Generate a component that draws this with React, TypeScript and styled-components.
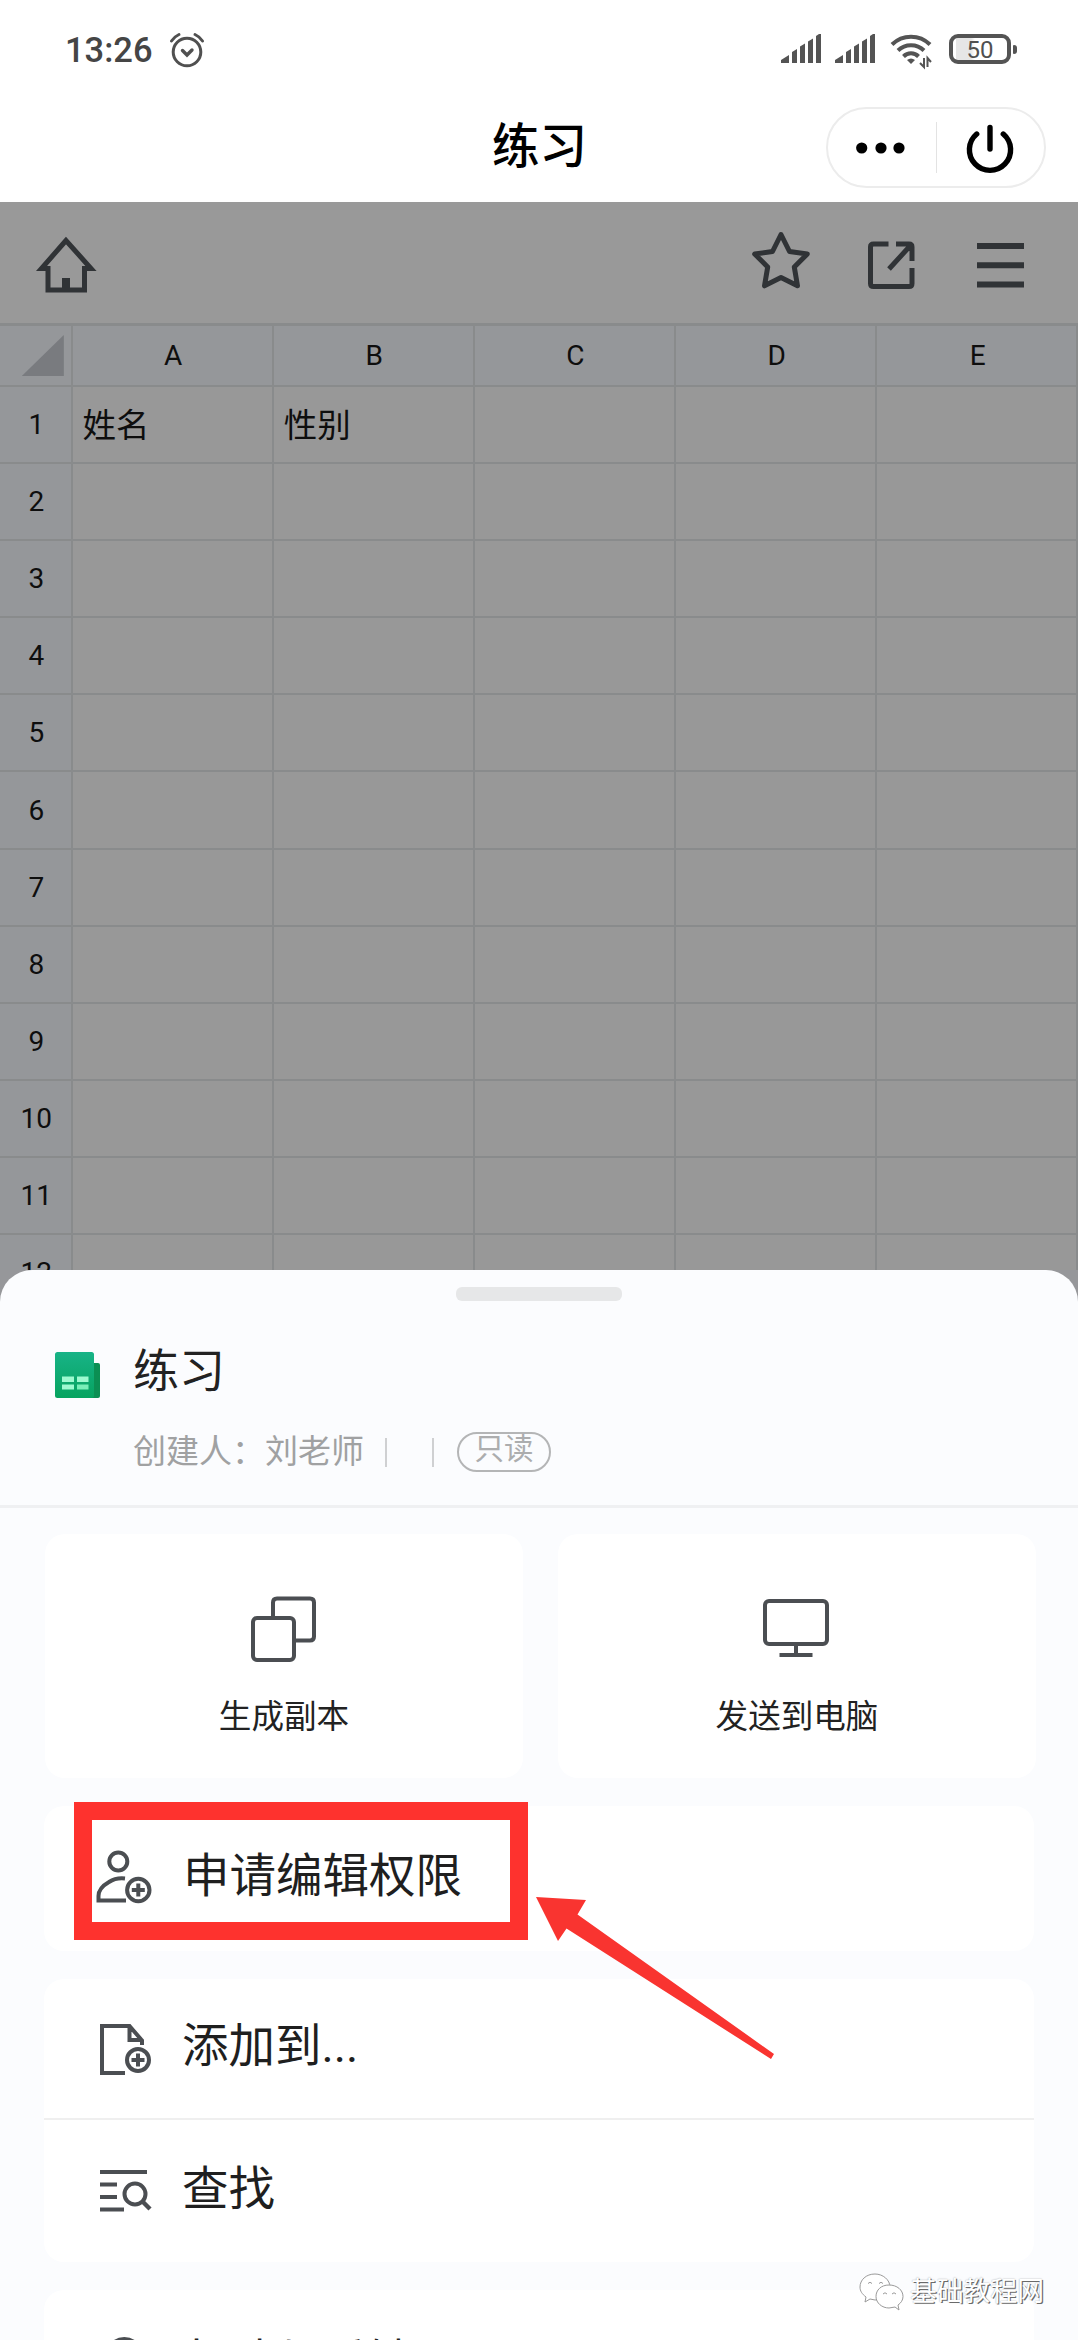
import React from "react";
import styled, { createGlobalStyle } from "styled-components";

const GlobalStyle = createGlobalStyle`
  html, body { margin: 0; padding: 0; background: #ffffff; }
  * { box-sizing: border-box; }
`;

const sans = `Roboto, "Noto Sans CJK SC", sans-serif`;
const ink = "#4b4e52";

const Screen = styled.div`
  position: relative;
  width: 1080px;
  height: 2340px;
  overflow: hidden;
  display: flex;
  flex-direction: column;
  background: #ffffff;
  font-family: ${sans};
`;

/* ---------- status bar ---------- */
const StatusBar = styled.div`
  height: 96px;
  padding: 0 63px 0 65px;
  display: flex;
  align-items: flex-start;
  justify-content: space-between;
`;
const StatusLeft = styled.div`
  display: flex;
  align-items: flex-start;
`;
const Clock = styled.span`
  width: 103px;
  padding-top: 30px;
  font-size: 34.5px;
  line-height: 40px;
  font-weight: 500;
  color: #454545;
`;
const StatusRight = styled.div`
  display: flex;
  align-items: flex-start;
  padding-top: 30px;
`;
const Signals = styled.svg`
  margin-right: 14px;
`;
const Battery = styled.div`
  display: flex;
  align-items: center;
  margin: 4px 0 0 14px;
`;
const BatteryBody = styled.div`
  width: 62px;
  height: 30px;
  border: 4px solid #545454;
  border-radius: 9px;
  font-size: 24px;
  line-height: 24px;
  text-align: center;
  color: #505050;
  background: linear-gradient(90deg, transparent 3px, #e6e6e6 3px, #e6e6e6 18px, #fff 22px);
`;
const BatteryNub = styled.div`
  width: 4px;
  height: 9px;
  margin-left: 2px;
  border-radius: 1px 3px 3px 1px;
  background: #545454;
`;

/* ---------- title bar ---------- */
const TitleBar = styled.div`
  height: 106px;
  padding: 11px 34px 0 0;
  display: grid;
  grid-template-columns: 254px 1fr 220px;
`;
const Title = styled.h1`
  grid-column: 2;
  margin: 0;
  padding-left: 238px;
  font-size: 47.5px;
  line-height: 80px;
  font-weight: 500;
  color: #000;
`;
const Capsule = styled.div`
  height: 81px;
  border: 2px solid #ececec;
  border-radius: 41px;
  display: flex;
  align-items: center;
`;
const CapsuleHalf = styled.div`
  flex: 1;
  height: 77px;
`;
const CapsuleRule = styled.div`
  width: 1px;
  height: 51px;
  background: #e3e3e3;
`;

/* ---------- sheet document ---------- */
const DocArea = styled.div`
  width: 1078px;
  height: 1068px;
  flex: none;
  display: flex;
  flex-direction: column;
  background: #999999;
`;
const Toolbar = styled.div`
  flex: none;
  height: 121px;
  padding: 24px 46px 0 30px;
  display: flex;
  justify-content: space-between;
`;
const ToolGroup = styled.div`
  display: flex;
  gap: 35.5px;
`;
const Table = styled.div`
  border-top: 3px solid #898b8c;
  display: grid;
  grid-template-columns: 72.6px 201.1px 201.2px 201.1px 201.2px 201.2px;
  grid-template-rows: 61px;
  grid-auto-rows: 77.1px;
  height: 947px;
  overflow: hidden;
`;
const Cell = styled.div<{ $kind: "corner" | "col" | "row" | "data" }>`
  border-right: 2.5px solid #898b8c;
  border-bottom: 2.5px solid #898b8c;
  background: ${(p) => (p.$kind === "data" ? "#989898" : "#95979a")};
  display: flex;
  align-items: center;
  justify-content: ${(p) => (p.$kind === "data" ? "flex-start" : "center")};
  padding: ${(p) => (p.$kind === "data" ? "0 0 5px 10px" : "0 0 0 2px")};
  font-size: ${(p) => (p.$kind === "data" ? "33.5px" : "28px")};
  color: #0e0e0e;
  white-space: nowrap;
`;
const CornerMark = styled.div`
  width: 42px;
  height: 41px;
  margin: 0 0 0 13px;
  background: #797b7f;
  clip-path: polygon(100% 0, 100% 100%, 0 100%);
`;

/* ---------- bottom sheet ---------- */
const Backing = styled.div`
  width: 1078px;
  height: 40px;
  flex: none;
  margin-bottom: -40px;
  background: #96979a;
`;
const Sheet = styled.section`
  position: relative;
  width: 1078px;
  height: 1070px;
  flex: none;
  border-radius: 32px 32px 0 0;
  background: #fbfcfe;
  display: flex;
  flex-direction: column;
`;
const Handle = styled.div`
  flex: none;
  width: 166px;
  height: 14px;
  margin: 17px auto 0;
  border-radius: 6px;
  background: #e6e7e8;
`;
const FileHead = styled.div`
  flex: none;
  height: 207px;
  padding: 42px 0 0 54px;
  border-bottom: 3px solid #eff0f2;
  display: grid;
  grid-template-columns: 79px 1fr;
  align-content: start;
`;
const FileIcon = styled.svg`
  margin-top: 8px;
`;
const FileName = styled.h2`
  margin: 0;
  font-size: 46px;
  line-height: 56px;
  font-weight: 400;
  color: #222;
`;
const Meta = styled.div`
  grid-column: 2;
  margin-top: 32px;
  height: 42px;
  display: flex;
  align-items: center;
  color: #a0a1a2;
  font-size: 33px;
  line-height: 42px;
`;
const MetaRule = styled.span<{ $left: number }>`
  width: 2px;
  height: 29px;
  margin-left: ${(p) => p.$left}px;
  background: #cfd0d2;
`;
const Badge = styled.span`
  width: 94px;
  height: 40px;
  margin-left: 23px;
  border: 2.5px solid #b4b5b6;
  border-radius: 20px;
  font-size: 29.5px;
  line-height: 31px;
  text-align: center;
  color: #acadae;
`;
const CardRow = styled.div`
  margin: 26px 42px 0 45px;
  display: grid;
  grid-template-columns: 478px 478px;
  justify-content: space-between;
`;
const ActionCard = styled.div`
  height: 244px;
  border-radius: 20px;
  background: #ffffff;
  display: flex;
  flex-direction: column;
  align-items: center;
  padding-top: 56px;
`;
const ActionLabel = styled.span`
  margin-top: 25px;
  font-size: 32.6px;
  line-height: 44px;
  color: #222;
`;
const List = styled.div<{ $top: number }>`
  flex: none;
  margin: ${(p) => p.$top}px 44px 0 44px;
  border-radius: 20px;
  background: #ffffff;
`;
const Item = styled.div<{ $h: number; $pad: number; $rule?: boolean }>`
  height: ${(p) => p.$h}px;
  padding: ${(p) => p.$pad}px 0 0 48px;
  display: flex;
  align-items: flex-start;
  border-bottom: ${(p) => (p.$rule ? "2px solid #efefef" : "none")};
`;
const ItemIcon = styled.svg`
  flex: none;
`;
const ItemLabel = styled.span<{ $drop?: number; $left?: number }>`
  margin-left: ${(p) => p.$left ?? 26}px;
  padding-top: ${(p) => p.$drop ?? 0}px;
  font-size: 46.5px;
  line-height: 64px;
  color: #1f1f1f;
  white-space: nowrap;
`;

/* ---------- annotations over the page ---------- */
const HighlightBox = styled.div`
  position: absolute;
  left: 74px;
  top: 1802px;
  width: 454px;
  height: 138px;
  border: 18.5px solid #fe322e;
`;
const ArrowMark = styled.svg`
  position: absolute;
  left: 530px;
  top: 1890px;
`;
const Watermark = styled.div`
  position: absolute;
  left: 858px;
  top: 2270px;
  display: flex;
  align-items: center;
`;
const WatermarkText = styled.span`
  margin-left: 4px;
  font-size: 26.8px;
  line-height: 44px;
  color: #ffffff;
  text-shadow: 1.2px 1.2px 0.6px #6a6a6a, 0 0 1.5px #9a9a9a;
`;

const SignalIcon = () => (
  <Signals width="40" height="36" viewBox="0 0 40 36" fill="#545454">
    <path d="M0 33v-3l8-5v8zM11 33v-11l5-3v14zM19 33v-16.500l5-3v19.500zM27 33v-21.500l5-3v24.500zM35 33v-27l3-2h2v29z" />
  </Signals>
);

const columns = ["A", "B", "C", "D", "E"];
const rows = Array.from({ length: 12 }, (_, i) => i + 1);
const values: Record<string, string> = { A1: "姓名", B1: "性别" };

export default function App() {
  return (
    <Screen>
      <GlobalStyle />
      <StatusBar>
        <StatusLeft>
          <Clock>13:26</Clock>
          <svg width="40" height="70" viewBox="0 0 40 70" fill="none" stroke="#505050" strokeWidth="3" strokeLinecap="round">
            <circle cx="19" cy="52" r="13.800" />
            <path d="M14.500 50.500l4.500 4.500 5-5" strokeWidth="3.400" />
            <path d="M3.500 41q3-4.500 7.500-6.500M27 34.500q4.500 2 7.500 6.500" />
          </svg>
        </StatusLeft>
        <StatusRight>
          <SignalIcon />
          <SignalIcon />
          <svg width="46" height="40" viewBox="0 0 46 40" fill="none" stroke="#545454" strokeWidth="4">
            <path d="M3 14.500a27 27 0 0 1 38 0M9 20.500a18.500 18.500 0 0 1 26 0M14.500 26.500a10.500 10.500 0 0 1 15 0" />
            <path d="M18 30q4-3 8 0l-4 4z" fill="#545454" stroke="none" />
            <path d="M35 28v9l-4-4M38.500 37v-9l3.500 4" strokeWidth="2" />
          </svg>
          <Battery>
            <BatteryBody>50</BatteryBody>
            <BatteryNub />
          </Battery>
        </StatusRight>
      </StatusBar>

      <TitleBar>
        <Title>练习</Title>
        <Capsule>
          <CapsuleHalf>
            <svg width="107" height="77" viewBox="0 0 107 77" fill="#000">
              <circle cx="33.700" cy="39" r="5.600" />
              <circle cx="53" cy="39" r="5.600" />
              <circle cx="71" cy="39" r="5.600" />
            </svg>
          </CapsuleHalf>
          <CapsuleRule />
          <CapsuleHalf>
            <svg width="107" height="77" viewBox="0 0 107 77" fill="none" stroke="#000" strokeWidth="5.400" strokeLinecap="round">
              <path d="M53 18.500v21.500M39.700 25a20.600 20.600 0 1 0 26.600 0" />
            </svg>
          </CapsuleHalf>
        </Capsule>
      </TitleBar>

      <DocArea>
        <Toolbar>
          <svg width="74" height="74" viewBox="0 0 74 74" fill="none" stroke="#303336" strokeWidth="5">
            <path d="M36 14.500L11.500 42.500h6.500v21.500h36.500V42.500H61z" />
            <path d="M36 52v12" strokeWidth="8" />
          </svg>
          <ToolGroup>
            <svg width="72" height="74" viewBox="0 0 72 74" fill="none" stroke="#303336" strokeWidth="5" strokeLinejoin="round">
              <path d="M36 8.500l8.500 17 17.800 2.500-13 13 3.200 18.800L36 51.500 19.500 59.800l3.200-18.800-13-13 17.800-2.500z" />
            </svg>
            <svg width="72" height="74" viewBox="0 0 72 74" fill="none" stroke="#303336" strokeWidth="5" strokeLinejoin="round">
              <path d="M35.500 18H20.500q-3 0-3 3v36.500q0 3 3 3h35.500q3 0 3-3V42M43 18h13q3 0 3 3v14M57 20L36 43" />
            </svg>
            <svg width="72" height="74" viewBox="0 0 72 74" stroke="#303336" strokeWidth="6">
              <path d="M17 20h47M17 39.300h47M17 58.600h47" />
            </svg>
          </ToolGroup>
        </Toolbar>
        <Table>
          <Cell $kind="corner">
            <CornerMark />
          </Cell>
          {columns.map((c) => (
            <Cell key={c} $kind="col">{c}</Cell>
          ))}
          {rows.map((r) => (
            <React.Fragment key={r}>
              <Cell $kind="row">{r}</Cell>
              {columns.map((c) => (
                <Cell key={c} $kind="data">{values[c + r]}</Cell>
              ))}
            </React.Fragment>
          ))}
        </Table>
      </DocArea>

      <Backing />
      <Sheet>
        <Handle />
        <FileHead>
          <FileIcon width="47" height="48" viewBox="0 0 47 48">
            <defs>
              <linearGradient id="leaf" x1="0" y1="0" x2="0" y2="1">
                <stop offset="0" stopColor="#18b387" />
                <stop offset="1" stopColor="#06a35f" />
              </linearGradient>
            </defs>
            <path d="M30 12h14q2 0 2 2v31q0 2-2 2H30z" fill="#0b8f53" />
            <rect x="1" y="1" width="39" height="46" rx="2.500" fill="url(#leaf)" />
            <path d="M8 25.500h12v5.500H8zM23 25.500h11.500v5.500H23zM8 33.500h12v5H8z" fill="#9dfad0" />
            <path d="M23 33.500h11.500v5H23z" fill="#78efb8" />
          </FileIcon>
          <FileName>练习</FileName>
          <Meta>
            <span>创建人：刘老师</span>
            <MetaRule $left={21} />
            <MetaRule $left={45} />
            <Badge>只读</Badge>
          </Meta>
        </FileHead>

        <CardRow>
          <ActionCard>
            <svg width="76" height="80" viewBox="0 0 76 80" fill="none" stroke={ink} strokeWidth="4">
              <path d="M27 26.500V12.500q0-4 4-4h33q4 0 4 4v34q0 4-4 4H48" />
              <rect x="7" y="28" width="41" height="42" rx="4" />
            </svg>
            <ActionLabel>生成副本</ActionLabel>
          </ActionCard>
          <ActionCard>
            <svg width="76" height="80" viewBox="0 0 76 80" fill="none" stroke={ink} strokeWidth="4">
              <rect x="6" y="11" width="62" height="43" rx="4" />
              <path d="M37 54v9M20.500 65h33" />
            </svg>
            <ActionLabel>发送到电脑</ActionLabel>
          </ActionCard>
        </CardRow>

        <List $top={28}>
          <Item $h={145} $pad={35}>
            <ItemIcon width="64" height="70" viewBox="0 0 64 70" fill="none" stroke={ink} strokeWidth="4">
              <circle cx="26.300" cy="20.500" r="9" />
              <path d="M33 37.500Q24 36.500 17 41 6.500 47 6.500 55v4.500H34" />
              <circle cx="46.300" cy="49" r="11.200" />
              <path d="M46.300 42.500v13M39.800 49h13" />
            </ItemIcon>
            <ItemLabel $drop={2.5} $left={27}>申请编辑权限</ItemLabel>
          </Item>
        </List>

        <List $top={28}>
          <Item $h={141} $pad={33.5} $rule>
            <ItemIcon width="64" height="70" viewBox="0 0 64 70" fill="none" stroke={ink} strokeWidth="4">
              <path d="M50 32v-4.500L37.500 13H10v47h23M37.500 13v14h13" />
              <circle cx="46" cy="47" r="11" />
              <path d="M46 40.500v13M39.500 47h13" />
            </ItemIcon>
            <ItemLabel $drop={1.5}>添加到...</ItemLabel>
          </Item>
          <Item $h={142} $pad={35}>
            <ItemIcon width="64" height="70" viewBox="0 0 64 70" fill="none" stroke={ink} strokeWidth="4">
              <path d="M8 17h47M8 29.500h17M8 42h17M8 54.500h24" />
              <circle cx="43" cy="39" r="10.500" />
              <path d="M50 46l8 8" strokeWidth="4.500" />
            </ItemIcon>
            <ItemLabel $drop={2}>查找</ItemLabel>
          </Item>
        </List>

        <List $top={28}>
          <Item $h={142} $pad={36.5}>
            <ItemIcon width="64" height="70" viewBox="0 0 64 70" fill="none" stroke={ink} strokeWidth="4">
              <circle cx="32.300" cy="29" r="17" />
            </ItemIcon>
            <ItemLabel $drop={3.5}>帮助与反馈</ItemLabel>
          </Item>
        </List>
      </Sheet>

      <HighlightBox />
      <ArrowMark width="252" height="176" viewBox="0 0 252 176" fill="#f93430">
        <path d="M6 7L56 10 47.500 24.500 244 164 241 169 36.500 38.500 28 51z" />
      </ArrowMark>
      <Watermark>
        <svg width="48" height="44" viewBox="0 0 48 44" fill="#fff" stroke="#9a9a9a" strokeWidth="1">
          <path d="M17 4C8 4 2 10 2 17c0 4 2 7 6 10l-1 5 5-3 5 1c9 0 15-6 15-13S25 4 17 4z" />
          <path d="M31 15c-8 0-13 5-13 11.500S24 38 31 38l6-1 4 3-1-5c3-2 5-5 5-8.500C45 20 39 15 31 15z" />
          <path d="M10 13.500q2-2.500 4 0M21 13.500q2-2.500 4 0M25 24q2-2.500 4 0M34 24q2-2.500 4 0" fill="none" />
        </svg>
        <WatermarkText>基础教程网</WatermarkText>
      </Watermark>
    </Screen>
  );
}
